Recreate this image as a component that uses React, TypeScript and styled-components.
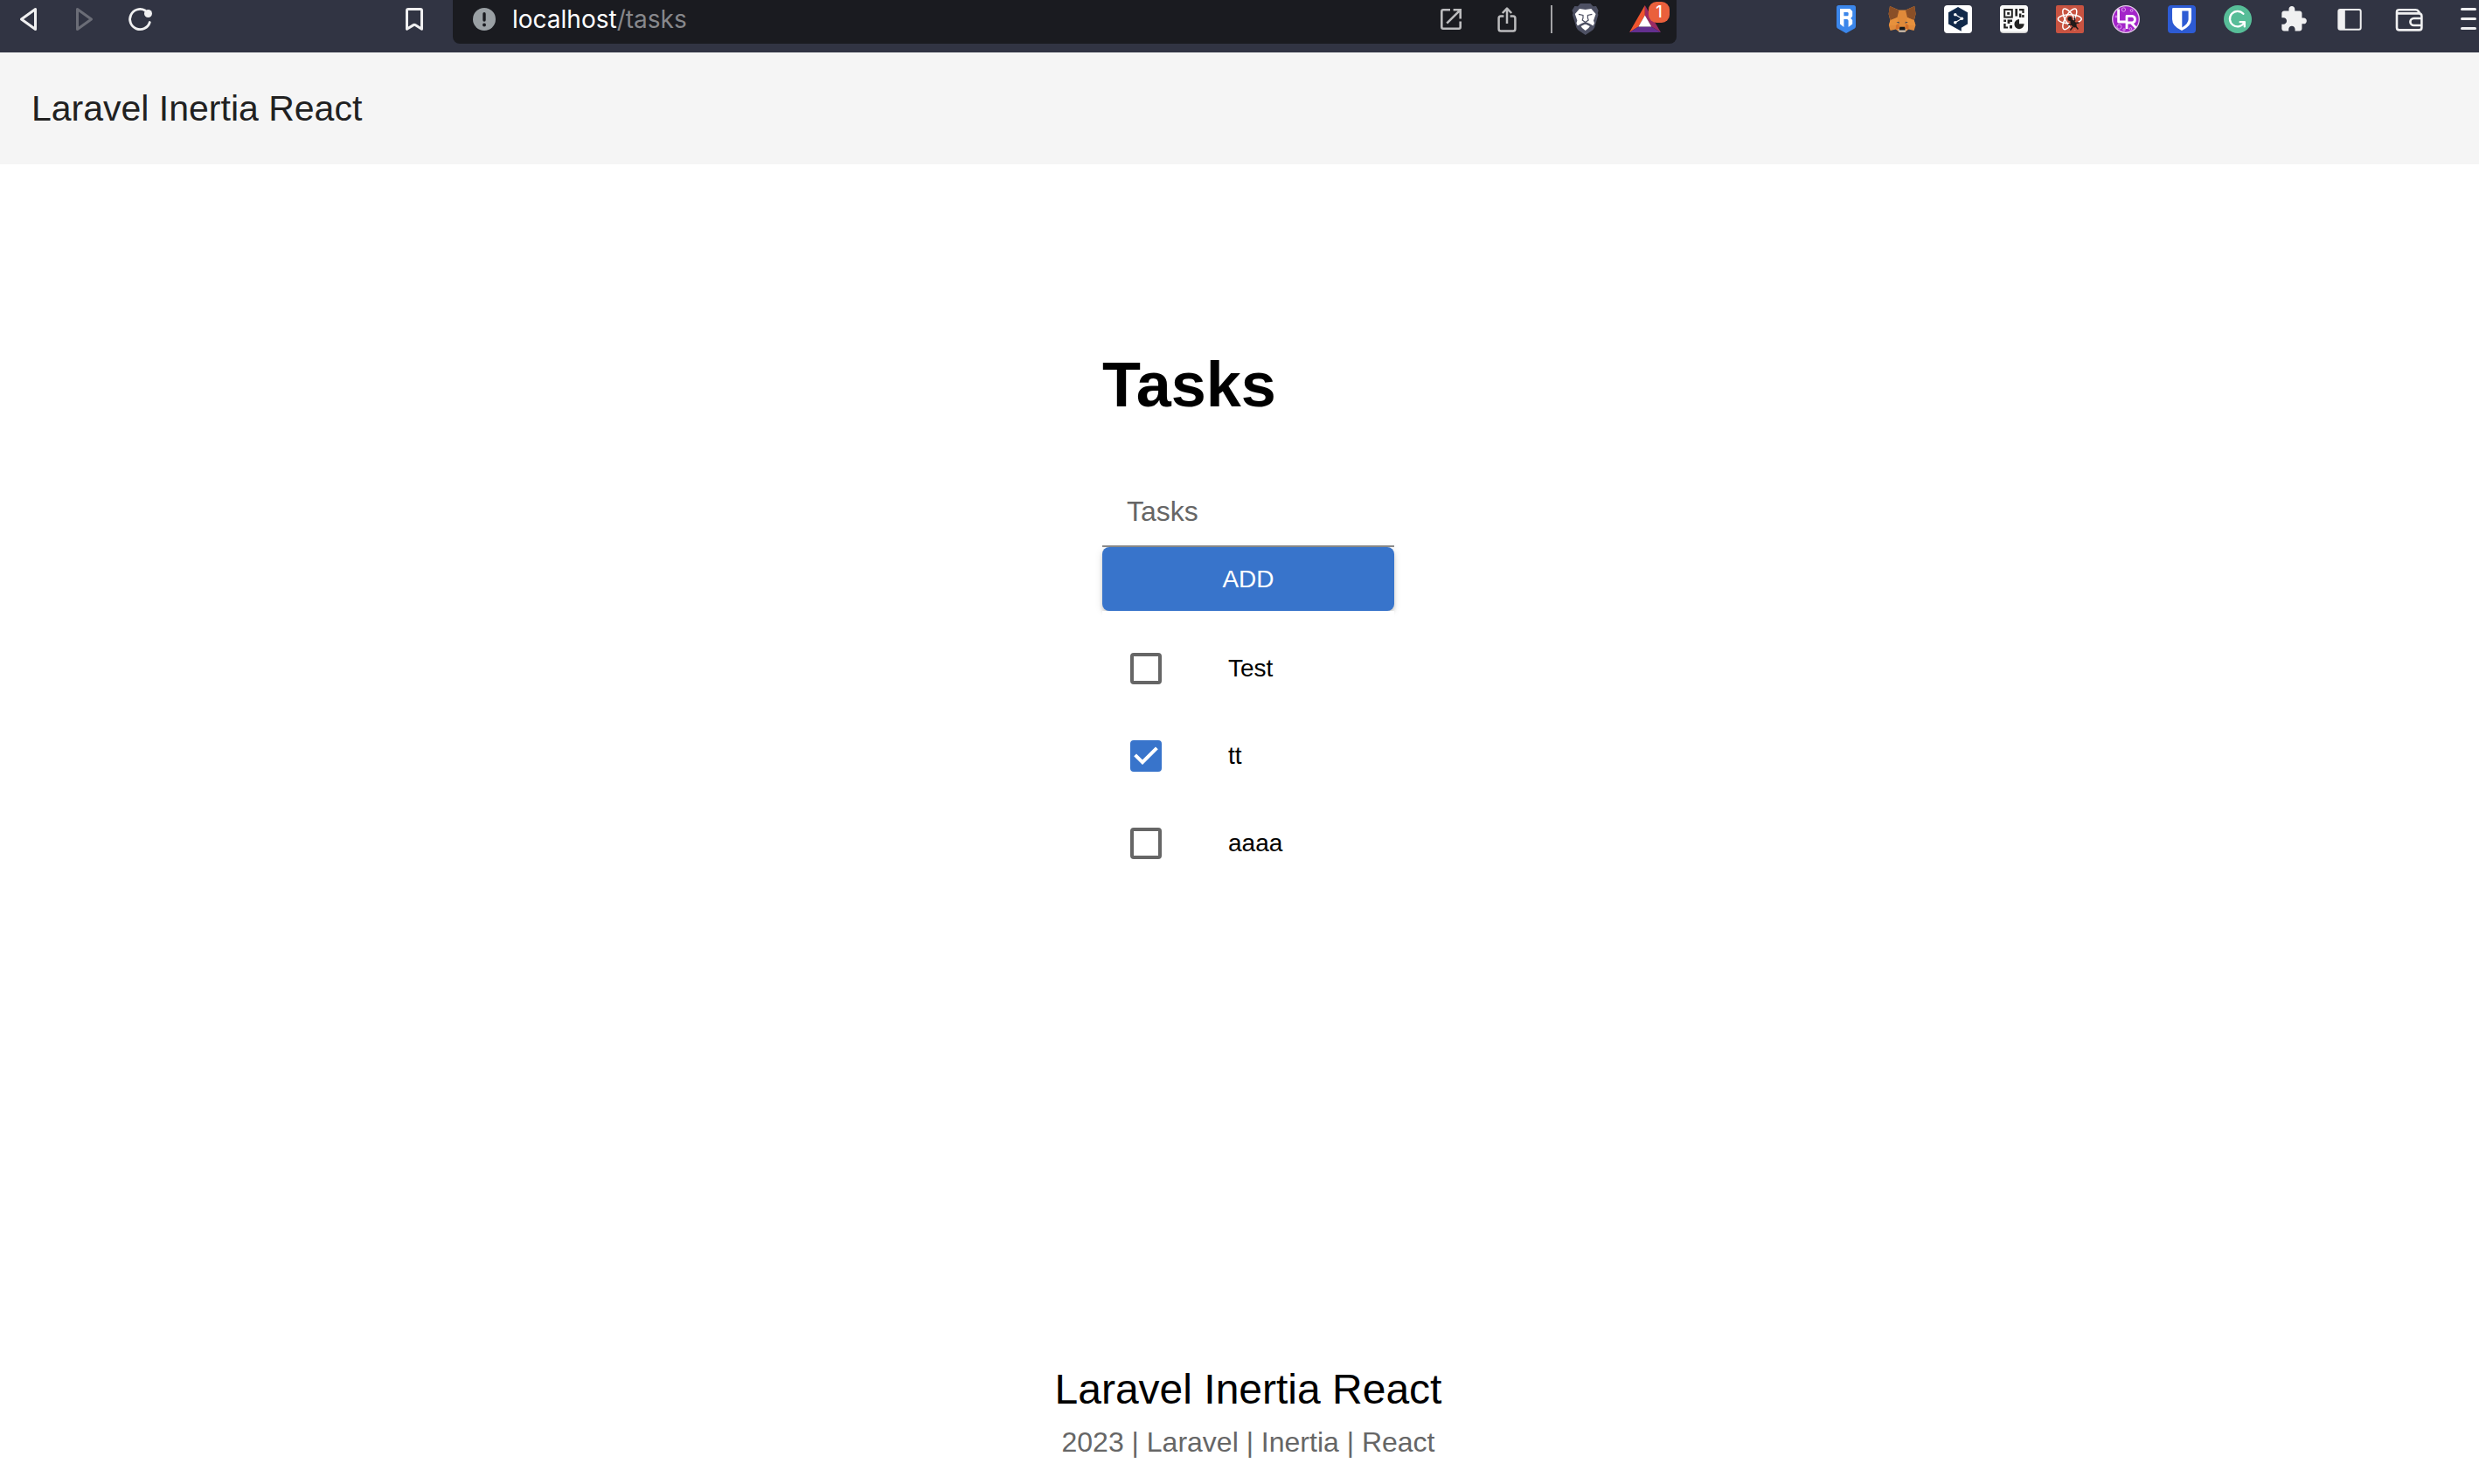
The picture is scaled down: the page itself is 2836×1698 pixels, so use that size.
import React, { useState } from "react";
import styled, { createGlobalStyle } from "styled-components";

const colors = {
  chrome: "#313443",
  address: "#1a1b20",
  glyph: "#f0f0f1",
  glyphMuted: "#6b6d77",
  addressGlyph: "#bcbcbe",
  primary: "#3874cb",
  secondaryText: "#666666",
  appBar: "#f5f5f5",
};

const GlobalStyle = createGlobalStyle`
  *, *::before, *::after { box-sizing: border-box; }
  body {
    margin: 0;
    background: #ffffff;
    color: #000000;
    font-family: "Liberation Sans", Arial, Helvetica, sans-serif;
  }
`;

const Page = styled.div`
  display: flex;
  flex-direction: column;
  min-height: 100vh;
`;

/* Browser toolbar */

const Toolbar = styled.div`
  display: flex;
  align-items: flex-start;
  height: 60px;
  background: ${colors.chrome};
`;

const IconGroup = styled.div<{ $gap: number }>`
  display: flex;
  align-items: center;
  gap: ${(p) => p.$gap}px;
  height: 44px;
`;

const NavArea = styled.div`
  display: flex;
  justify-content: space-between;
  width: 518px;
  padding: 0 28px 0 16px;
`;

const ExtensionArea = styled.div`
  display: flex;
  gap: 32px;
  padding-left: 178px;
`;

const IconButton = styled.button<{ $width?: number; $color?: string }>`
  position: relative;
  display: flex;
  align-items: center;
  justify-content: center;
  width: ${(p) => p.$width ?? 32}px;
  height: 32px;
  padding: 0;
  border: 0;
  background: none;
  color: ${(p) => p.$color ?? colors.glyph};
  cursor: pointer;

  svg {
    display: block;
    flex: none;
  }
`;

const AddressBar = styled.div`
  display: flex;
  flex: 1;
  align-items: flex-start;
  justify-content: space-between;
  height: 50px;
  padding: 0 18px 0 20px;
  border-radius: 0 0 8px 8px;
  background: ${colors.address};
`;

const Url = styled.span`
  color: #ffffff;
  font-family: Inter, "Liberation Sans", sans-serif;
  font-size: 28px;
  line-height: 44px;
`;

const UrlPath = styled.span`
  color: #87888c;
`;

const Divider = styled.span`
  width: 2px;
  height: 32px;
  background: #a3a3a6;
`;

const BraveGroup = styled(IconGroup)`
  padding-left: 22px;
`;

const Badge = styled.span`
  position: absolute;
  top: -4px;
  left: 22px;
  width: 24px;
  height: 24px;
  border-radius: 9px;
  background: #ea603c;
  color: #ffffff;
  font-family: Inter, "Liberation Sans", sans-serif;
  font-size: 18px;
  font-weight: 500;
  line-height: 24px;
  text-align: center;
`;

/* Application */

const AppBar = styled.header`
  display: flex;
  align-items: center;
  height: 128px;
  padding: 0 36px;
  background: ${colors.appBar};
`;

const Brand = styled.a`
  color: #212121;
  font-size: 41px;
  line-height: 64px;
  text-decoration: none;
`;

const Main = styled.main`
  display: flex;
  flex: 1;
  flex-direction: column;
  align-items: center;
  padding: 208px 0 64px 20px;
`;

const TaskPanel = styled.section`
  display: flex;
  flex-direction: column;
  width: 334px;
`;

const Heading = styled.h1`
  margin: 0 0 60px;
  font-size: 72px;
  font-weight: 700;
  line-height: 88px;
`;

const TaskForm = styled.form`
  display: flex;
  flex-direction: column;
`;

const TaskInput = styled.input`
  width: 100%;
  height: 82px;
  padding: 2px 28px 0;
  border: 0;
  border-bottom: 2px solid #8c8c8c;
  background: transparent;
  font: inherit;
  font-size: 32px;
  outline: none;

  &::placeholder {
    color: ${colors.secondaryText};
    opacity: 1;
  }
`;

const AddButton = styled.button`
  height: 73px;
  border: 0;
  border-radius: 8px;
  background: ${colors.primary};
  box-shadow: 0 4px 4px rgba(0, 0, 0, 0.14), 0 2px 10px rgba(0, 0, 0, 0.12);
  color: #ffffff;
  font: inherit;
  font-size: 28px;
  cursor: pointer;
`;

const TaskList = styled.ul`
  position: relative;
  margin: 0;
  padding: 16px 0;
  background: #ffffff;
  list-style: none;
`;

const TaskLabel = styled.label`
  display: grid;
  grid-template-columns: 112px 1fr;
  align-items: center;
  height: 100px;
  padding: 0 32px;
  font-size: 28px;
  line-height: 42px;
  cursor: pointer;
`;

const CheckCell = styled.span`
  display: grid;

  > * {
    grid-area: 1 / 1;
  }

  svg {
    pointer-events: none;
  }
`;

const Checkbox = styled.input`
  appearance: none;
  width: 36px;
  height: 36px;
  margin: 0;
  border: 4px solid ${colors.secondaryText};
  border-radius: 4px;
  cursor: pointer;

  &:checked {
    border-color: ${colors.primary};
    background: ${colors.primary};
  }
`;

const Footer = styled.footer`
  display: flex;
  flex-direction: column;
  align-items: center;
  gap: 4px;
  padding: 0 0 24px 20px;
`;

const FooterTitle = styled.p`
  margin: 0;
  font-size: 48px;
  line-height: 64px;
`;

const FooterNote = styled.p`
  margin: 0;
  color: ${colors.secondaryText};
  font-size: 32px;
  line-height: 48px;
`;

/* Icons */

type IconProps = { children: React.ReactNode; width?: number; height?: number };

const Icon = ({ children, width = 32, height = 32 }: IconProps) => (
  <svg width={width} height={height} viewBox={`0 0 ${width} ${height}`} fill="none" aria-hidden="true">
    {children}
  </svg>
);

const Stroke = ({ d, w = 3 }: { d: string; w?: number }) => (
  <path d={d} stroke="currentColor" strokeWidth={w} strokeLinecap="round" strokeLinejoin="round" />
);

const BackIcon = () => (
  <Icon><Stroke d="M24.5 4.5V27.5L8.5 16Z" /></Icon>
);

const ForwardIcon = () => (
  <Icon><Stroke d="M8.5 4.5V27.5L24.5 16Z" /></Icon>
);

const ReloadIcon = () => (
  <Icon>
    <Stroke d="M22 6A11.6 11.6 0 1 0 27.3 19.5" w={2.8} />
    <circle cx="25.5" cy="9.5" r="4.5" fill="currentColor" />
  </Icon>
);

const BookmarkIcon = () => (
  <Icon><Stroke d="M7.5 27.3V6Q7.5 4.5 9 4.5H23Q24.5 4.5 24.5 6V27.3L17 22.6Q16 22 15 22.6Z" /></Icon>
);

const InfoIcon = () => (
  <Icon>
    <circle cx="16" cy="16" r="13" fill="#9aa0a4" />
    <path d="M16 9.8V17" stroke={colors.address} strokeWidth="3.4" strokeLinecap="round" />
    <circle cx="16" cy="22.4" r="2" fill={colors.address} />
  </Icon>
);

const OpenIcon = () => (
  <Icon>
    <g stroke="currentColor" strokeWidth="2.6">
      <path d="M15 5.3H7Q5.3 5.3 5.3 7V25Q5.3 26.7 7 26.7H25Q26.7 26.7 26.7 25V18.6" />
      <path d="M18.6 5.3H26.7V15.5M26.4 5.6L11.2 20.6" />
    </g>
  </Icon>
);

const ShareIcon = () => (
  <Icon>
    <g stroke="currentColor" strokeWidth="2.5" strokeLinejoin="round">
      <path d="M12.4 12.6H9Q6.6 12.6 6.6 15V27Q6.6 29.6 9 29.6H23Q25.4 29.6 25.4 27V15Q25.4 12.6 23 12.6H19.6" />
      <path d="M16 21V3.6M10.8 9L16 3.6L21.2 9" />
    </g>
  </Icon>
);

const LionIcon = () => (
  <Icon width={32} height={36}>
    <path d="M10 0H21.5L24.5 3.2L28 3L30.6 8L29.8 11L30.4 13L26.2 27.5Q25 30 22.5 31.6L15.7 36L9 31.6Q6.4 30 5.4 27.5L1 13L1.6 11L0.4 8L3.4 3L7 3.2Z" fill="#4d5063" />
    <path d="M9 6L15.7 7L22.4 6L27.6 12L25 19.4L26 22.4L24.6 25.4L20.4 23L15.7 21L11 23L6.8 25.4L5.4 22.4L6.4 19.4L3.8 12Z" fill="#fff" />
    <path d="M15.7 23.4L20.8 26L19.4 28L15.7 31L12 28L10.6 26Z" fill="#fff" />
    <path d="M8 12.4L13 13.4V16.6L12.2 19L15.7 21.6L19.2 19L18.4 16.6V13.4L23.4 12.4M15.7 21V24" stroke="#4d5063" strokeWidth="1.2" />
  </Icon>
);

const BatIcon = () => (
  <Icon width={36} height={32}>
    <path d="M17.8 0L0 31L10.4 24.6L17.8 11.6Z" fill="#f0552f" />
    <path d="M17.8 0L36 31L25.3 24.6L17.8 11.6Z" fill="#9b2a63" />
    <path d="M0 31L10.4 24.6H25.3L36 31Z" fill="#632f8f" />
    <path d="M17.8 11.6L25.3 24.6H10.4Z" fill="#fff" />
  </Icon>
);

const RoninIcon = () => (
  <Icon>
    <path d="M5 2.5Q5 0 7.5 0H24.5Q27 0 27 2.5V24Q27 25.6 25.8 26.4L17 31.6Q16 32.2 15 31.6L6.2 26.4Q5 25.6 5 24Z" fill="#3b86ea" />
    <path d="M9 4H20.4L23.2 7V12.6L21.2 15L23.2 17V21.4L18.6 25V17.4L17.4 16H13.4V25L9 21.4Z" fill="#fff" />
    <path d="M13.4 8H17.4Q18.6 8 18.6 9.2V11Q18.6 12.2 17.4 12.2H13.4Z" fill="#3b86ea" />
  </Icon>
);

const FoxIcon = () => (
  <Icon>
    <path d="M2 1L12.4 5.6H20L30.2 1L31.6 10L29.8 17.4L31.4 23L29.6 29L23.4 27.4L19.6 30.6H12.6L8.8 27.4L2.6 29L0.8 23L2.4 17.4L0.6 10Z" fill="#e08a3a" />
    <path d="M2 1L12.4 5.8L10.4 14L2.6 17L0.6 10Z" fill="#8a4f27" />
    <path d="M30.2 1L20 5.8L22 14L29.6 17L31.6 10Z" fill="#8a4f27" />
    <path d="M2.4 17.4L10.4 14L12 21L9 23L1 23Z" fill="#e7913d" />
    <path d="M29.8 17.4L22 14L20.4 21L23.4 23L31.4 23Z" fill="#e7913d" />
    <path d="M9 23L12 21L13.2 27L8.8 27.4ZM23.4 23L20.4 21L19.2 27L23.4 27.4Z" fill="#d4702a" />
    <path d="M9.4 19.4L12.4 18.8L13 20.8Z" fill="#3d4654" />
    <path d="M23 19.4L20 18.8L19.4 20.8Z" fill="#3d4654" />
    <path d="M11.4 27H21L19.6 30.8H12.6Z" fill="#c9bdb0" />
    <path d="M13.4 24.8H19L19.8 28.4H12.6Z" fill="#16181c" />
  </Icon>
);

const DeeplIcon = () => (
  <Icon>
    <rect width="32" height="32" rx="4" fill="#fff" />
    <path d="M16 2L27 8.3V21.6L19.8 25.8V29.8L5 21.6V8.3Z" fill="#11294a" />
    <path d="M12.8 10.8L20.4 15.3L12.8 19.8" stroke="#fff" strokeWidth="1.1" />
    <circle cx="12.8" cy="10.8" r="1.8" fill="#fff" />
    <circle cx="20.4" cy="15.3" r="1.8" fill="#fff" />
    <circle cx="12.8" cy="19.8" r="1.8" fill="#fff" />
  </Icon>
);

const QrIcon = () => (
  <Icon>
    <rect width="32" height="32" rx="4" fill="#cfcfcf" />
    <rect width="32" height="30.4" rx="4" fill="#fafafa" />
    <rect x="5.2" y="5" width="8.6" height="8.6" stroke="#222" strokeWidth="2" />
    <rect x="8.2" y="8" width="2.8" height="2.8" fill="#222" />
    <path d="M17.4 4H20V12.6H17.4ZM22 4H27.6V9H25.4V6.2H22ZM22 9.6H24.4V14H22ZM25.2 11H27.6V14H25.2Z" fill="#222" />
    <path d="M4.2 16.6H7V19H4.2ZM8.6 16.6H14V19H11.4V21H8.6ZM4.2 21H6.6V24.6H9V26.6H4.2ZM11 23H14V26.6H11Z" fill="#222" />
    <path d="M22 16V21.2H27.6A5.6 5.6 0 1 1 22 16Z" fill="#222" />
  </Icon>
);

const ReactDebugIcon = () => (
  <Icon>
    <rect width="32" height="32" rx="2" fill="#c85341" />
    <g stroke="#fff" strokeWidth="1.5">
      <ellipse cx="15.8" cy="15.8" rx="13.4" ry="5" />
      <ellipse cx="15.8" cy="15.8" rx="13.4" ry="5" transform="rotate(60 15.8 15.8)" />
      <ellipse cx="15.8" cy="15.8" rx="13.4" ry="5" transform="rotate(120 15.8 15.8)" />
    </g>
    <path d="M14.6 20L24 15.4L28 27L18 29Z" fill="#c85341" />
    <circle cx="16" cy="15.6" r="2.5" fill="#221a1a" />
    <ellipse cx="20" cy="21" rx="3" ry="5" transform="rotate(-32 20 21)" fill="#221a1a" />
    <path d="M18 22L13.6 22.4M19.4 24.6L16.4 28.6M21.6 18L21.4 13.8M22.4 20.4L26.4 20M22.6 24L25.4 27.4" stroke="#221a1a" strokeWidth="1.5" />
  </Icon>
);

const LrIcon = () => (
  <Icon>
    <circle cx="16" cy="16" r="15.3" fill="#a324c9" stroke="#e5cdea" strokeWidth="1.3" />
    <g stroke="#dd9cec" strokeWidth="1">
      <circle cx="13.4" cy="5" r="2.2" />
      <circle cx="22.6" cy="6" r="1.4" />
      <circle cx="8.4" cy="24.6" r="2.6" />
      <circle cx="14" cy="28" r="1.2" />
      <circle cx="21.4" cy="27" r="1.4" />
      <circle cx="5" cy="13" r="1" />
    </g>
    <g stroke="#fff" strokeWidth="2.8" strokeLinejoin="round">
      <path d="M7.6 4.5V19H17" />
      <path d="M17 27V12.4H23.4A3.9 3.9 0 0 1 23.4 20H17M22 20L27.4 25.6" />
    </g>
  </Icon>
);

const BitwardenIcon = () => (
  <Icon>
    <rect width="32" height="32" rx="4" fill="#2d5bd4" />
    <path d="M6.4 3H25.6Q27 3 27 4.4V16Q27 24 16 29Q5 24 5 16V4.4Q5 3 6.4 3Z" fill="#fff" />
    <path d="M16.3 6.4H23.6V16Q23.6 21 16.3 25.4Z" fill="#2d5bd4" />
  </Icon>
);

const GrammarlyIcon = () => (
  <Icon>
    <circle cx="16" cy="16" r="16" fill="#57bd98" />
    <path d="M22.4 9.8A8.8 8.8 0 1 0 23.6 19.6" stroke="#fff" strokeWidth="2.3" strokeLinecap="round" />
    <path d="M18.6 19.2H23.8V24.4" stroke="#fff" strokeWidth="2.3" strokeLinecap="round" strokeLinejoin="round" />
  </Icon>
);

const PuzzleIcon = () => (
  <Icon>
    <path
      transform="translate(-0.4 -0.4) scale(1.36)"
      fill="currentColor"
      d="M20.5 11H19V7c0-1.1-.9-2-2-2h-4V3.5C13 2.12 11.88 1 10.5 1S8 2.12 8 3.5V5H4c-1.1 0-1.99.9-1.99 2v3.8H3.5c1.49 0 2.7 1.21 2.7 2.7s-1.21 2.7-2.7 2.7H2V20c0 1.1.9 2 2 2h3.8v-1.5c0-1.49 1.21-2.7 2.7-2.7 1.49 0 2.7 1.21 2.7 2.7V22H17c1.1 0 2-.9 2-2v-4h1.5c1.38 0 2.5-1.12 2.5-2.5S21.88 11 20.5 11z"
    />
  </Icon>
);

const PanelIcon = () => (
  <Icon>
    <rect x="3.3" y="5" width="25.4" height="22.8" rx="2" stroke="currentColor" strokeWidth="2" />
    <path d="M4 5H10.8V27.8H4Z" fill="currentColor" />
  </Icon>
);

const WalletIcon = () => (
  <Icon>
    <g stroke="currentColor" strokeWidth="2.6" strokeLinejoin="round">
      <path d="M2 7.6V25.4Q2 28.4 5 28.4H27.4Q30.4 28.4 30.4 25.4V12.4Q30.4 9.4 27.4 9.4H4.6Q2 9.4 2 7.4Q2 5.2 4.6 5.2H23.4Q25.6 5.2 26.8 7L28.4 9.4" />
      <path d="M30.4 15H21.4A4 4 0 0 0 21.4 23H30.4" />
    </g>
  </Icon>
);

const MenuIcon = () => (
  <Icon width={28}><Stroke d="M8.5 4.5H23.5M8.5 15.5H23.5M8.5 26.5H23.5" /></Icon>
);

const CheckIcon = () => (
  <Icon width={36} height={36}>
    <path d="M5.6 16.8L14 25.2L30.4 8.8" stroke="#fff" strokeWidth="4" />
  </Icon>
);

const extensions = [
  { name: "Ronin Wallet", icon: <RoninIcon /> },
  { name: "MetaMask", icon: <FoxIcon /> },
  { name: "DeepL", icon: <DeeplIcon /> },
  { name: "QR Code", icon: <QrIcon /> },
  { name: "React Developer Tools", icon: <ReactDebugIcon /> },
  { name: "LR", icon: <LrIcon /> },
  { name: "Bitwarden", icon: <BitwardenIcon /> },
  { name: "Grammarly", icon: <GrammarlyIcon /> },
  { name: "Extensions", icon: <PuzzleIcon /> },
];

const BrowserToolbar = () => (
  <Toolbar>
    <NavArea>
      <IconGroup $gap={32}>
        <IconButton aria-label="Back"><BackIcon /></IconButton>
        <IconButton aria-label="Forward" $color={colors.glyphMuted}><ForwardIcon /></IconButton>
        <IconButton aria-label="Reload"><ReloadIcon /></IconButton>
      </IconGroup>
      <IconGroup $gap={0}>
        <IconButton aria-label="Bookmark"><BookmarkIcon /></IconButton>
      </IconGroup>
    </NavArea>
    <AddressBar>
      <IconGroup $gap={16}>
        <IconButton aria-label="Site information"><InfoIcon /></IconButton>
        <Url>localhost<UrlPath>/tasks</UrlPath></Url>
      </IconGroup>
      <IconGroup $gap={0}>
        <IconGroup $gap={34}>
          <IconGroup $gap={32}>
            <IconButton aria-label="Open" $color={colors.addressGlyph}><OpenIcon /></IconButton>
            <IconButton aria-label="Share" $color={colors.addressGlyph}><ShareIcon /></IconButton>
          </IconGroup>
          <Divider />
        </IconGroup>
        <BraveGroup $gap={34}>
          <IconButton aria-label="Brave Shields"><LionIcon /></IconButton>
          <IconButton aria-label="Brave Rewards" $width={36}>
            <BatIcon />
            <Badge>1</Badge>
          </IconButton>
        </BraveGroup>
      </IconGroup>
    </AddressBar>
    <ExtensionArea>
      <IconGroup $gap={32}>
        {extensions.map((e) => (
          <IconButton key={e.name} aria-label={e.name}>{e.icon}</IconButton>
        ))}
      </IconGroup>
      <IconGroup $gap={36}>
        <IconButton aria-label="Sidebar"><PanelIcon /></IconButton>
        <IconButton aria-label="Wallet"><WalletIcon /></IconButton>
        <IconButton aria-label="Menu" $width={28}><MenuIcon /></IconButton>
      </IconGroup>
    </ExtensionArea>
  </Toolbar>
);

type Task = { id: number; name: string; done: boolean };

const initialTasks: Task[] = [
  { id: 1, name: "Test", done: false },
  { id: 2, name: "tt", done: true },
  { id: 3, name: "aaaa", done: false },
];

export default function App() {
  const [tasks, setTasks] = useState(initialTasks);
  const [draft, setDraft] = useState("");

  const toggle = (id: number) =>
    setTasks((all) => all.map((t) => (t.id === id ? { ...t, done: !t.done } : t)));

  const add = (event: React.FormEvent) => {
    event.preventDefault();
    const name = draft.trim();
    if (!name) return;
    setTasks((all) => [...all, { id: all.length + 1, name, done: false }]);
    setDraft("");
  };

  return (
    <Page>
      <GlobalStyle />
      <BrowserToolbar />
      <AppBar>
        <Brand href="/">Laravel Inertia React</Brand>
      </AppBar>
      <Main>
        <TaskPanel>
          <Heading>Tasks</Heading>
          <TaskForm onSubmit={add}>
            <TaskInput
              aria-label="Tasks"
              placeholder="Tasks"
              value={draft}
              onChange={(e) => setDraft(e.target.value)}
            />
            <AddButton type="submit">ADD</AddButton>
          </TaskForm>
          <TaskList>
            {tasks.map((task) => (
              <li key={task.id}>
                <TaskLabel htmlFor={`task-${task.id}`}>
                  <CheckCell>
                    <Checkbox
                      id={`task-${task.id}`}
                      type="checkbox"
                      checked={task.done}
                      onChange={() => toggle(task.id)}
                    />
                    {task.done && <CheckIcon />}
                  </CheckCell>
                  {task.name}
                </TaskLabel>
              </li>
            ))}
          </TaskList>
        </TaskPanel>
      </Main>
      <Footer>
        <FooterTitle>Laravel Inertia React</FooterTitle>
        <FooterNote>2023 | Laravel | Inertia | React</FooterNote>
      </Footer>
    </Page>
  );
}
